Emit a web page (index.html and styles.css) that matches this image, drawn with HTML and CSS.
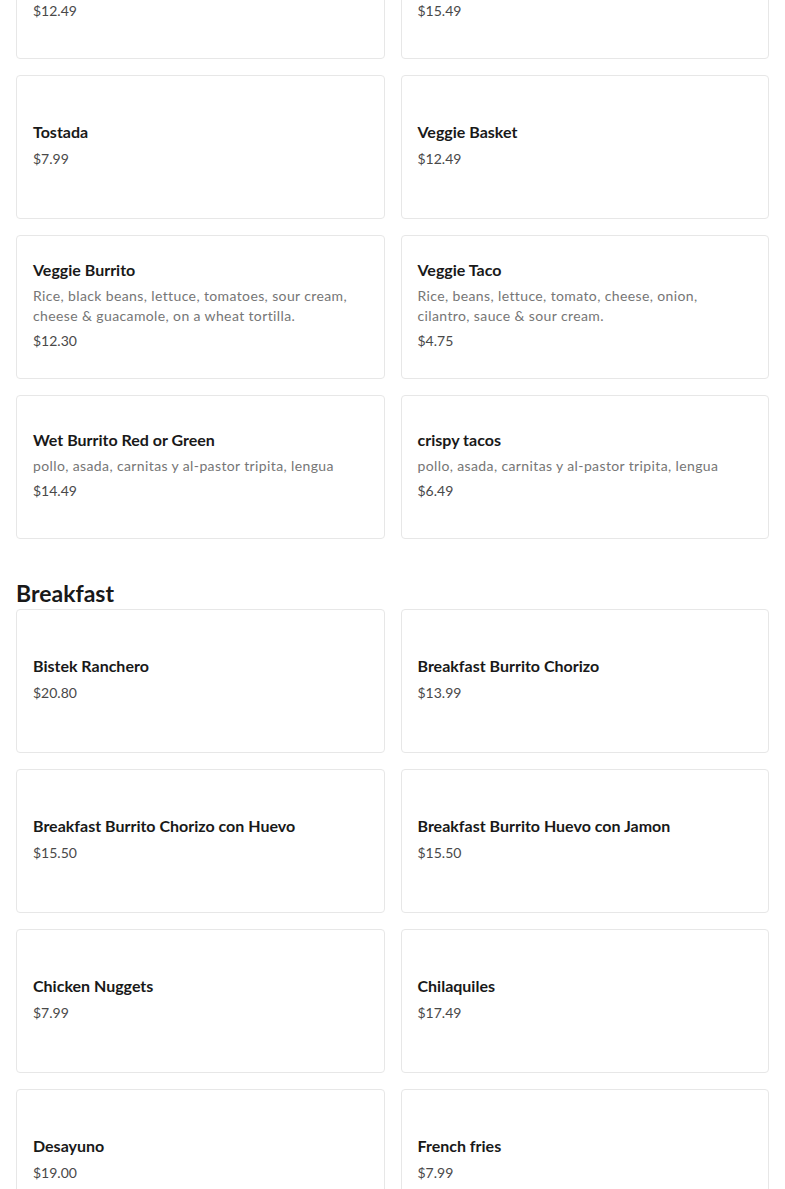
FILE: index.html
```html
<!DOCTYPE html>
<html>
<head>
<meta charset="utf-8">
<link rel="stylesheet" href="styles.css">
</head>
<body>
<main class="page">
  <section class="section first">
    <div class="grid">
      <div class="card"><div class="title">Veggie Quesadilla</div><div class="desc">pollo, asada, carnitas y al-pastor tripita, lengua</div><div class="price">$12.49</div></div>
      <div class="card"><div class="title">Veggie Plate</div><div class="desc">pollo, asada, carnitas y al-pastor tripita, lengua</div><div class="price">$15.49</div></div>
      <div class="card"><div class="title">Tostada</div><div class="price">$7.99</div></div>
      <div class="card"><div class="title">Veggie Basket</div><div class="price">$12.49</div></div>
      <div class="card"><div class="title">Veggie Burrito</div><div class="desc">Rice, black beans, lettuce, tomatoes, sour cream, cheese &amp; guacamole, on a wheat tortilla.</div><div class="price">$12.30</div></div>
      <div class="card"><div class="title">Veggie Taco</div><div class="desc">Rice, beans, lettuce, tomato, cheese, onion, cilantro, sauce &amp; sour cream.</div><div class="price">$4.75</div></div>
      <div class="card"><div class="title">Wet Burrito Red or Green</div><div class="desc">pollo, asada, carnitas y al-pastor tripita, lengua</div><div class="price">$14.49</div></div>
      <div class="card"><div class="title">crispy tacos</div><div class="desc">pollo, asada, carnitas y al-pastor tripita, lengua</div><div class="price">$6.49</div></div>
    </div>
  </section>
  <section class="section">
    <h2 class="heading">Breakfast</h2>
    <div class="grid">
      <div class="card"><div class="title">Bistek Ranchero</div><div class="price">$20.80</div></div>
      <div class="card"><div class="title">Breakfast Burrito Chorizo</div><div class="price">$13.99</div></div>
      <div class="card"><div class="title">Breakfast Burrito Chorizo con Huevo</div><div class="price">$15.50</div></div>
      <div class="card"><div class="title">Breakfast Burrito Huevo con Jamon</div><div class="price">$15.50</div></div>
      <div class="card"><div class="title">Chicken Nuggets</div><div class="price">$7.99</div></div>
      <div class="card"><div class="title">Chilaquiles</div><div class="price">$17.49</div></div>
      <div class="card"><div class="title">Desayuno</div><div class="price">$19.00</div></div>
      <div class="card"><div class="title">French fries</div><div class="price">$7.99</div></div>
    </div>
  </section>
</main>
</body>
</html>
```
FILE: styles.css
```css
html, body {
  margin: 0;
  padding: 0;
  background: #ffffff;
}
body {
  font-family: Lato, "Liberation Sans", sans-serif;
  color: #191919;
  overflow: hidden;
}
.page {
  padding: 0 16px;
  margin-top: -85px;
}
.section.first {
  margin-bottom: 38px;
}
.heading {
  margin: 0;
  font-size: 23px;
  line-height: 32px;
  font-weight: 700;
  color: #191919;
}
.grid {
  display: grid;
  grid-template-columns: 1fr 1fr;
  gap: 16px;
}
.card {
  box-sizing: border-box;
  height: 144px;
  border: 1px solid #e7e7e7;
  border-radius: 4px;
  padding: 10px 16px 16px;
  display: flex;
  flex-direction: column;
  justify-content: center;
}
.title {
  font-size: 16px;
  line-height: 24px;
  font-weight: 700;
  color: #191919;
}
.desc {
  margin-top: 4px;
  font-size: 14px;
  line-height: 20px;
  letter-spacing: 0.38px;
  color: #767676;
}
.price {
  margin-top: 5px;
  font-size: 14px;
  line-height: 20px;
  color: #494949;
}
```
